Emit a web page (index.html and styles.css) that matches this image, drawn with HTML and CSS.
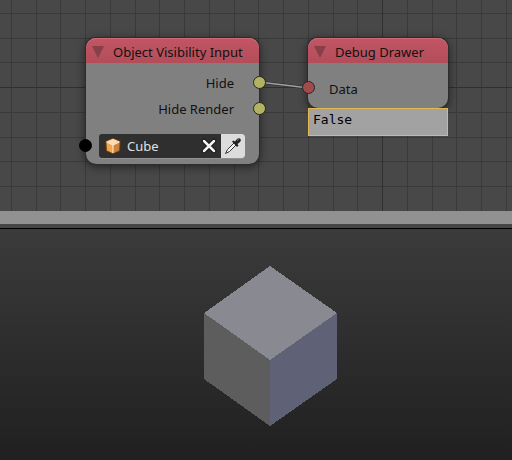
FILE: index.html
```html
<!DOCTYPE html>
<html lang="en">
<head>
<meta charset="utf-8">
<title>Node editor</title>
<link rel="stylesheet" href="styles.css">
</head>
<body>
<main class="screen">
  <section class="editor" aria-label="Node canvas">
    <svg class="link" width="50" height="8" viewBox="0 0 50 8" aria-hidden="true">
      <path d="M0 1 50 7" stroke="#333" stroke-width="3"/>
      <path d="M0 1 50 7" stroke="#a0a0a0" stroke-width="1.5"/>
    </svg>

    <article class="node node-input">
      <header class="node-header">
        <button class="collapse" aria-label="Collapse Object Visibility Input"><svg width="12" height="12" viewBox="0 0 12 12"><path d="M0 0H12L6 12Z"/></svg></button>
        <h2>Object Visibility Input</h2>
      </header>
      <div class="row output">Hide<span class="socket bool"></span></div>
      <div class="row output">Hide Render<span class="socket bool"></span></div>
      <div class="row picker">
        <span class="socket object"></span>
        <div class="field">
          <svg class="cube-icon" width="16" height="16" viewBox="0 0 16 16" aria-hidden="true">
            <path d="M8 0 15.500 3 15 13 8 16 1 13 .5 3Z" fill="#7c4518"/>
            <path d="M8 .8 14.500 3.500 8 7 1.500 3.500Z" fill="#ffdcb0"/>
            <path d="M1.500 4 8 7V15.300L2 12.500Z" fill="#f0a550"/>
            <path d="M14.500 4 8 7V15.300L14 12.500Z" fill="#cf8238"/>
            <path d="M1.500 4 8 7 14.500 4M8 7V15" fill="none" stroke="#fff0dc"/>
          </svg>
          <input type="text" value="Cube" aria-label="Object">
          <button class="clear" aria-label="Clear object"><svg width="16" height="16" viewBox="0 0 16 16"><path d="M3 3 13 13M13 3 3 13" stroke="#111" stroke-width="4.500" stroke-linecap="round"/><path d="M3 3 13 13M13 3 3 13" stroke="#f2f2f2" stroke-width="2.500" stroke-linecap="round"/></svg></button>
          <button class="pick" aria-label="Pick object"><svg width="18" height="18" viewBox="0 0 18 18"><path d="M10 6 3.500 12.500 1.500 16.500 5.500 14.500 12 8" fill="#f4f4f4" stroke="#333" stroke-linejoin="round"/><path d="M8 4.500 9.500 3.500 11 4.500 13 2Q15 .5 16.500 2 17.500 3.500 16 5L13.500 7 14.500 8.500 13 10Z" fill="#222"/><path d="M13 3.500 14.500 2.500" stroke="#999"/></svg></button>
        </div>
      </div>
    </article>

    <article class="node node-debug">
      <header class="node-header">
        <button class="collapse" aria-label="Collapse Debug Drawer"><svg width="12" height="12" viewBox="0 0 12 12"><path d="M0 0H12L6 12Z"/></svg></button>
        <h2>Debug Drawer</h2>
      </header>
      <div class="row input"><span class="socket data"></span>Data</div>
      <output class="result">False</output>
    </article>
  </section>

  <div class="divider"></div>
  <div class="region-edge"></div>

  <section class="viewport" aria-label="3D view">
    <svg width="133" height="160" viewBox="0 0 133 160" shape-rendering="crispEdges" role="img" aria-label="Cube">
      <path d="M66 0 133 47 66 94 0 47Z" fill="#898992"/>
      <path d="M0 47 66 94V160L0 113Z" fill="#5d5d5d"/>
      <path d="M133 47 66 94V160L133 113Z" fill="#5f6176"/>
    </svg>
  </section>
</main>
</body>
</html>
```

FILE: styles.css
```css
* { box-sizing: border-box; }

body {
  margin: 0;
  background: #222;
  color: #111;
  font: 13px/18px "Noto Sans", "DejaVu Sans", sans-serif;
}

button {
  display: flex;
  align-items: center;
  justify-content: center;
  padding: 0;
  border: 0;
  background: none;
}

svg { display: block; }

.screen {
  display: flex;
  flex-direction: column;
  min-height: 100vh;
}

/* The grid repeats every 99px with four lines in each tile. */
.editor {
  --line: #3a3a3a;
  position: relative;
  flex: none;
  height: 211px;
  overflow: hidden;
  background:
    linear-gradient(#303030, #303030) 382px 0 / 1px 100% no-repeat,
    linear-gradient(#303030, #303030) 0 87px / 100% 1px no-repeat,
    linear-gradient(90deg, var(--line) 1px, transparent 1px 25px, var(--line) 25px 26px, transparent 26px 49px, var(--line) 49px 50px, transparent 50px 74px, var(--line) 74px 75px, transparent 75px) 11px 0 / 99px 100%,
    linear-gradient(var(--line) 1px, transparent 1px 25px, var(--line) 25px 26px, transparent 26px 49px, var(--line) 49px 50px, transparent 50px 74px, var(--line) 74px 75px, transparent 75px) 0 13px / 100% 99px,
    #484848;
}

.link {
  position: absolute;
  left: 259px;
  top: 81px;
}

.node {
  position: absolute;
  top: 38px;
  border-radius: 10px;
  background: #808080;
  box-shadow: 0 0 0 1px #2c2c2c, 0 2px 8px 1px rgba(0, 0, 0, 0.5);
}

.node-input {
  left: 86px;
  width: 173px;
  padding-bottom: 5px;
}

.node-debug {
  left: 308px;
  width: 140px;
  height: 70px;
}

.node-header {
  display: flex;
  align-items: center;
  gap: 9px;
  height: 25px;
  padding: 3px 6px 0;
  border-radius: 10px 10px 0 0;
  background: linear-gradient(#c25563, #b34d5a);
  box-shadow: inset 0 1px 0 #cd6a76;
}

.node-header h2 {
  margin: 0;
  font-size: 13px;
  font-weight: 400;
  white-space: nowrap;
}

.collapse path { fill: #873f49; }

.row {
  position: relative;
  display: flex;
  align-items: center;
  height: 26px;
}

.output {
  justify-content: flex-end;
  padding-right: 25px;
}

.node-header + .output { margin-top: 7px; }

.input {
  margin-top: 13px;
  padding-left: 21px;
}

.picker {
  margin-top: 11px;
  padding: 0 14px 0 13px;
}

.socket {
  position: absolute;
  top: 6px;
  width: 13px;
  height: 13px;
  border: 1px solid #262626;
  border-radius: 50%;
}

.output .socket { right: -7px; }
.input .socket { left: -6px; top: 5px; }
.picker .socket { left: -7px; }

.bool { background: #b3b264; }
.data { background: #a04c4c; }
.object { background: #000; border-color: #000; }

.field {
  display: flex;
  flex: 1;
  align-items: center;
  height: 24px;
  overflow: hidden;
  border-radius: 3px;
  background: #2f2f2f;
  box-shadow: 0 1px 0 #929292;
}

.cube-icon {
  flex: none;
  margin: 0 6px;
}

.field input {
  flex: 1;
  min-width: 0;
  padding: 0;
  border: 0;
  background: none;
  color: #e0e0e0;
  font: inherit;
}

.clear {
  width: 25px;
  height: 24px;
}

.pick {
  width: 24px;
  height: 24px;
  background: #dcdcdc;
}

.result {
  position: absolute;
  top: 70px;
  left: 0;
  width: 100%;
  height: 28px;
  padding: 2px 4px;
  border: 1px solid #e5b94f;
  background: #a2a2a2;
  color: #000;
  font: 13px/18px "DejaVu Sans Mono", monospace;
}

.divider {
  flex: none;
  height: 13px;
  background: #919191;
}

.region-edge {
  flex: none;
  height: 5px;
  border-bottom: 1px solid #000;
  background: #464646;
}

.viewport {
  display: flex;
  flex: 1;
  justify-content: center;
  padding: 37px 0 34px 29px;
  background: linear-gradient(#3b3b3b, #202020);
}
```
